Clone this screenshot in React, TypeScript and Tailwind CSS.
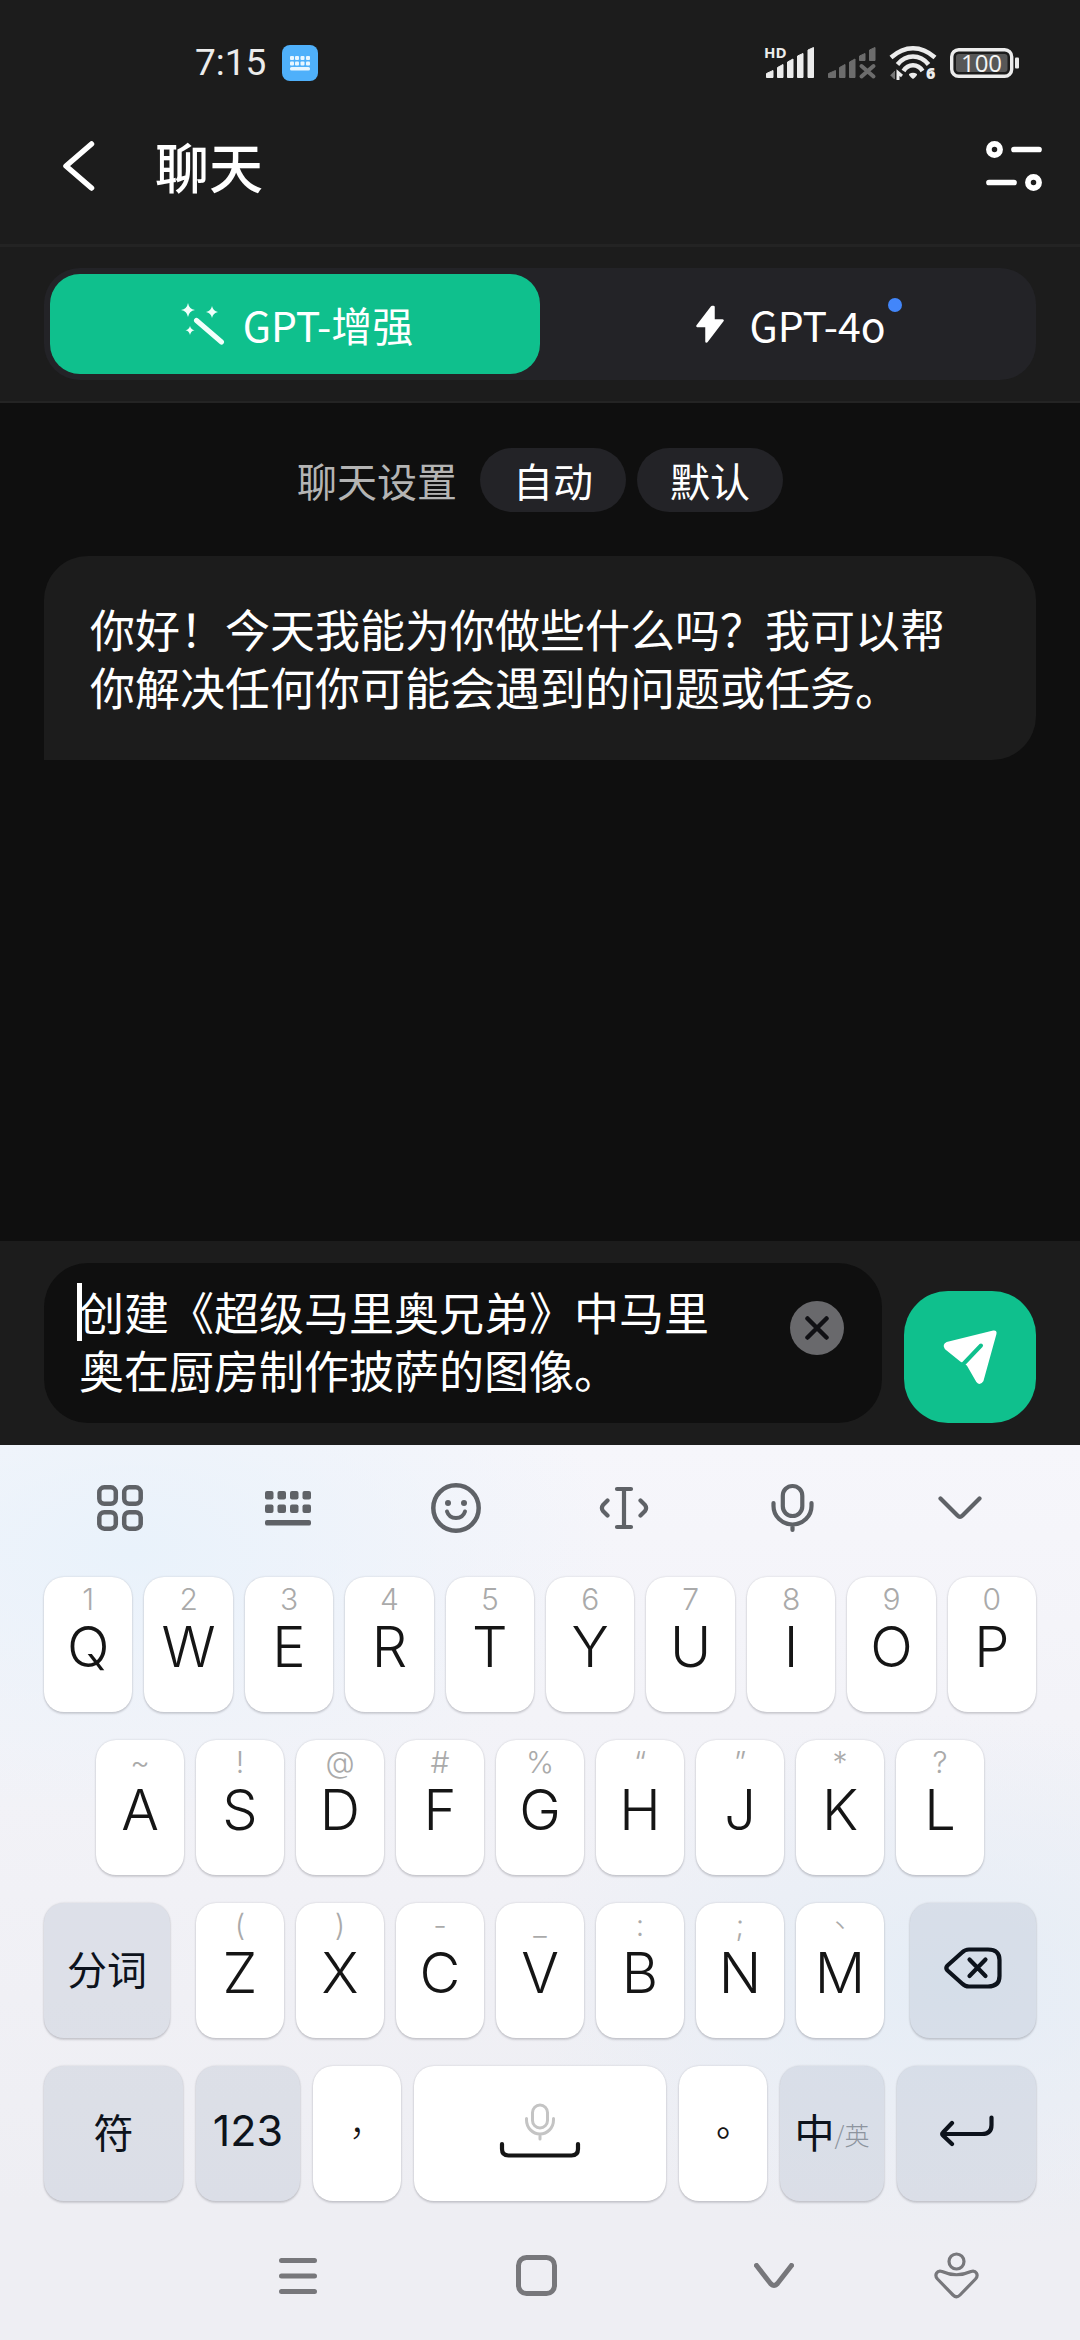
import React, { ChangeEvent, ReactNode, useState } from "react";
import clsx from "clsx";

interface IKey {
  letter: string;
  hint: string;
}

const firstRow: IKey[] = [
  { letter: "Q", hint: "1" },
  { letter: "W", hint: "2" },
  { letter: "E", hint: "3" },
  { letter: "R", hint: "4" },
  { letter: "T", hint: "5" },
  { letter: "Y", hint: "6" },
  { letter: "U", hint: "7" },
  { letter: "I", hint: "8" },
  { letter: "O", hint: "9" },
  { letter: "P", hint: "0" },
];

const secondRow: IKey[] = [
  { letter: "A", hint: "~" },
  { letter: "S", hint: "!" },
  { letter: "D", hint: "@" },
  { letter: "F", hint: "#" },
  { letter: "G", hint: "%" },
  { letter: "H", hint: "“" },
  { letter: "J", hint: "”" },
  { letter: "K", hint: "*" },
  { letter: "L", hint: "?" },
];

const thirdRow: IKey[] = [
  { letter: "Z", hint: "(" },
  { letter: "X", hint: ")" },
  { letter: "C", hint: "-" },
  { letter: "V", hint: "_" },
  { letter: "B", hint: ":" },
  { letter: "N", hint: ";" },
  { letter: "M", hint: "、" },
];

const StatusBar = () => (
  <div className="flex h-[88px] items-center justify-between pt-[38px] pr-[60px] pl-[195px]">
    <div className="flex items-center gap-4">
      <span className="font-['Roboto',sans-serif] text-[37px] leading-[44px] text-[#ececec]">
        7:15
      </span>
      <svg width="36" height="36" viewBox="0 0 36 36" aria-hidden="true">
        <rect width="36" height="36" rx="8" fill="#4fb0fa" />
        <g fill="#e8f6ff">
          {[8, 13, 18.5, 24].map((x) => (
            <React.Fragment key={x}>
              <rect x={x} y="11" width="4" height="4" rx="1" />
              <rect x={x} y="16.5" width="4" height="4" rx="1" />
            </React.Fragment>
          ))}
          <rect x="8" y="22" width="20" height="3.4" rx="1.5" />
        </g>
      </svg>
    </div>

    <div className="flex items-center gap-3">
      <svg
        width="51"
        height="36"
        viewBox="0 0 51 36"
        className="overflow-visible"
        aria-hidden="true"
      >
        <text
          x="0"
          y="13"
          fill="#ececec"
          fontFamily="Open Sans, sans-serif"
          fontSize="15"
          fontWeight="700"
        >
          HD
        </text>
        <path
          fill="#ececec"
          stroke="#ececec"
          strokeLinejoin="round"
          d="M2.5 28.5 9 25.5V32.5H2.5zM13.5 22.5 19 19.5V32.5H13.5zM23.5 17 29 14V32.5H23.5zM33.5 11 39 8.5V32.5H33.5zM44 5 49.5 2.5V32.5H44z"
        />
      </svg>
      <svg width="50" height="36" viewBox="0 0 50 36" aria-hidden="true">
        <path
          fill="#6c6c6c"
          stroke="#6c6c6c"
          strokeLinejoin="round"
          d="M1.5 28.5 8.5 25.5V32.5H1.5zM12.5 22.5 18 19.5V32.5H12.5zM22.5 17 28 14V32.5H22.5zM32.5 11 38 8.5V15.5H32.5zM42.5 5 48 2.5V15.5H42.5z"
        />
        <path
          d="M34.5 21 46.5 31.5M46.5 21 34.5 31.5"
          stroke="#6c6c6c"
          strokeWidth="4"
          strokeLinecap="round"
        />
      </svg>
      <svg
        width="48"
        height="36"
        viewBox="0 0 48 36"
        className="overflow-visible"
        aria-hidden="true"
      >
        <g fill="none" stroke="#ececec" strokeWidth="4.5">
          <path d="M2 12.5Q12.500 3.300 24 3.300T46 12.500" />
          <path d="M8.500 19.500Q15 11.600 24 11.600T39.500 19.500" />
          <path d="M14.500 26Q18 20.300 24 20.300T33.500 26" />
        </g>
        <path
          d="M20 29Q24 26.500 28 29 28.500 30.500 24 34 19.500 30.500 20 29z"
          fill="#ececec"
        />
        <path d="M1.500 30 5.500 34V26" fill="#777" stroke="#777" />
        <path d="M9 35V27.500L13 31" fill="none" stroke="#ececec" strokeWidth="3" />
        <text
          x="37"
          y="34"
          fill="#ececec"
          fontFamily="Open Sans, sans-serif"
          fontSize="16"
          fontWeight="800"
        >
          6
        </text>
      </svg>
      <svg width="71" height="32" viewBox="0 0 71 32" aria-hidden="true">
        <rect
          x="2.7"
          y="2.7"
          width="60"
          height="26.600"
          rx="7"
          fill="none"
          stroke="#ececec"
          strokeWidth="3.4"
        />
        <rect x="7" y="7" width="51.500" height="18" rx="3" fill="#575757" />
        <rect x="66" y="10.500" width="4" height="11" rx="1" fill="#ececec" />
        <text
          x="32.500"
          y="24.500"
          fill="#f4f4f4"
          textAnchor="middle"
          fontFamily="Open Sans, sans-serif"
          fontSize="24"
        >
          100
        </text>
      </svg>
    </div>
  </div>
);

const TitleBar = () => (
  <div className="flex h-[159px] items-center justify-between border-b-[3px] border-[#232323] pr-[38px] pl-[62px]">
    <div className="flex items-center gap-[60px]">
      <button type="button" aria-label="返回">
        <svg width="33" height="52" viewBox="0 0 33 52" fill="none">
          <path
            d="M29.500 4 4 26 29.500 48"
            stroke="#fff"
            strokeWidth="5.500"
            strokeLinecap="round"
            strokeLinejoin="round"
          />
        </svg>
      </button>
      <h1 className="text-[54px] leading-[64px] font-medium">聊天</h1>
    </div>
    <button type="button" aria-label="设置">
      <svg width="56" height="50" viewBox="0 0 56 50" fill="none">
        <g stroke="#fff" strokeWidth="5.700" strokeLinecap="round">
          <circle cx="8.500" cy="8.500" r="5.600" />
          <path d="M28 8.500H53M3 41.500H28" />
          <circle cx="47.500" cy="41.500" r="5.600" />
        </g>
      </svg>
    </button>
  </div>
);

const ModelTabs = () => {
  const [tab, setTab] = useState("enhanced");

  return (
    <div className="border-b-2 border-[#242424] px-11 pt-[21px] pb-[21px]">
      <div className="grid grid-cols-2 rounded-[36px] bg-[#232327] p-1.5 text-[41px] leading-[56px]">
        <button
          type="button"
          onClick={() => setTab("enhanced")}
          className={clsx(
            "flex h-[100px] items-center justify-center gap-[18px] rounded-[30px] pl-1",
            tab === "enhanced" && "bg-[#0fc08d]"
          )}
        >
          <svg width="44" height="44" viewBox="0 0 44 44" fill="#f2fffb">
            <path d="M7 1Q8 7 14 8 8 9 7 15 6 9 0 8 6 7 7 1zM31 4Q32 9 37 10 32 11 31 16 30 11 25 10 30 9 31 4zM9 24Q9.800 27.400 13.500 28.200 9.800 29 9 33 8.200 29 4.500 28.200 8.200 27.400 9 24z" />
            <path
              d="M15.500 18.500 40.500 40"
              stroke="#f2fffb"
              strokeWidth="5"
              strokeLinecap="round"
            />
          </svg>
          GPT-增强
        </button>
        <button
          type="button"
          onClick={() => setTab("4o")}
          className={clsx(
            "flex h-[100px] items-center justify-center gap-[25px] rounded-[30px] pl-3",
            tab === "4o" && "bg-[#0fc08d]"
          )}
        >
          <svg width="28" height="38" viewBox="0 0 28 38" fill="#fff">
            <path
              d="M16 2 1.500 21H10.500V36.500L26.500 15.500H17.500V2z"
              stroke="#fff"
              strokeWidth="2.500"
              strokeLinejoin="round"
            />
          </svg>
          <span className="relative">
            GPT-4o
            <span className="absolute top-0.5 -right-4 size-3.5 rounded-full bg-[#4286fa]" />
          </span>
        </button>
      </div>
    </div>
  );
};

const ChatArea = () => (
  <main className="flex-1 px-11 pt-[45px]">
    <div className="flex items-center justify-center gap-[11px] text-[40px] leading-[64px]">
      <span className="pr-3 text-[#b4b4b4]">聊天设置</span>
      <button type="button" className="rounded-full bg-[#232327] px-[33px]">
        自动
      </button>
      <button type="button" className="rounded-full bg-[#232327] px-[33px]">
        默认
      </button>
    </div>
    <p className="mt-11 rounded-[44px] rounded-bl-none bg-[#1c1c1c] py-11 pr-16 pl-[46px] text-[45px] leading-[58px]">
      你好！今天我能为你做些什么吗？我可以帮你解决任何你可能会遇到的问题或任务。
    </p>
  </main>
);

const MessageInput = () => {
  const [message, setMessage] = useState(
    "创建《超级马里奥兄弟》中马里奥在厨房制作披萨的图像。"
  );

  const onMessageChange = (e: ChangeEvent<HTMLTextAreaElement>) => {
    setMessage(e.target.value);
  };

  return (
    <div className="flex items-end gap-[22px] bg-[#1c1c1c] px-11 py-[22px]">
      <div className="relative flex flex-1 items-start rounded-[44px] bg-[#0f0f0f] pt-5 pr-[38px] pb-6 pl-[35px]">
        <span className="absolute left-[33px] h-[58px] w-[5px] bg-white" />
        <textarea
          aria-label="消息"
          rows={2}
          value={message}
          onChange={onMessageChange}
          className="block w-full flex-1 resize-none overflow-hidden text-[45px] leading-[58px] outline-none"
        />
        <button
          type="button"
          aria-label="清除"
          onClick={() => setMessage("")}
          className="mt-[18px] ml-12 flex size-[54px] items-center justify-center rounded-full bg-[#69696c]"
        >
          <svg width="24" height="24" viewBox="0 0 24 24">
            <path
              d="M2.500 2.500 21.500 21.500M21.500 2.500 2.500 21.500"
              stroke="#101014"
              strokeWidth="4.500"
              strokeLinecap="round"
            />
          </svg>
        </button>
      </div>
      <button
        type="button"
        aria-label="发送"
        className="flex size-[132px] items-center justify-center rounded-[44px] bg-[#0fc08d]"
      >
        <svg width="56" height="58" viewBox="0 0 56 58">
          <path
            d="M51.500 4 5 15.500Q2 17 4 20L19.500 32.500 26 36.500 35.500 53Q38 56 40 52.500L53 5.500Q53.500 3.500 51.500 4z"
            fill="#fff"
            stroke="#fff"
            strokeWidth="3"
            strokeLinejoin="round"
          />
          <path
            d="M18 39.500 39 17.500"
            stroke="#0fc08d"
            strokeWidth="4"
            strokeLinecap="round"
          />
        </svg>
      </button>
    </div>
  );
};

const ToolButton = ({ label, children }: { label: string; children: ReactNode }) => (
  <button type="button" aria-label={label} className="flex items-center justify-center">
    {children}
  </button>
);

const Toolbar = () => (
  <div className="grid h-[125px] grid-cols-6 px-9 text-[#5f6267]">
    <ToolButton label="菜单">
      <svg width="46" height="46" viewBox="0 0 46 46" fill="none">
        <g stroke="currentColor" strokeWidth="4.500">
          <rect x="2.300" y="2.300" width="16.500" height="16.500" rx="5" />
          <rect x="27.200" y="2.300" width="16.500" height="16.500" rx="5" />
          <rect x="2.300" y="27.200" width="16.500" height="16.500" rx="5" />
          <rect x="27.200" y="27.200" width="16.500" height="16.500" rx="5" />
        </g>
      </svg>
    </ToolButton>
    <ToolButton label="键盘">
      <svg width="46" height="36" viewBox="0 0 46 36" fill="currentColor">
        {[0, 12.5, 25, 37.5].map((x) => (
          <React.Fragment key={x}>
            <rect x={x} y="1" width="8.500" height="8.500" rx="2" />
            <rect x={x} y="14.500" width="8.500" height="8.500" rx="2" />
          </React.Fragment>
        ))}
        <rect y="30" width="46" height="5.500" rx="2" />
      </svg>
    </ToolButton>
    <ToolButton label="表情">
      <svg width="50" height="50" viewBox="0 0 50 50" fill="none">
        <circle cx="25" cy="25" r="22.700" stroke="currentColor" strokeWidth="4.500" />
        <circle cx="17" cy="20" r="3" fill="currentColor" />
        <circle cx="33" cy="20" r="3" fill="currentColor" />
        <path
          d="M16 28.500Q18 35 25 35T34 28.500"
          stroke="currentColor"
          strokeWidth="4"
          strokeLinecap="round"
        />
      </svg>
    </ToolButton>
    <ToolButton label="光标">
      <svg width="50" height="44" viewBox="0 0 50 44" fill="none">
        <path
          d="M25 3V41M18 3H32M18 41H32M8.500 14.500 4 19Q1.800 22 4 25L8.500 29.500M41.500 14.500 46 19Q48.200 22 46 25L41.500 29.500"
          stroke="currentColor"
          strokeWidth="4.200"
          strokeLinecap="round"
          strokeLinejoin="round"
        />
      </svg>
    </ToolButton>
    <ToolButton label="语音">
      <svg width="45" height="50" viewBox="0 0 45 50" fill="none">
        <g stroke="currentColor" strokeWidth="4.200" strokeLinecap="round">
          <rect x="12.800" y="3" width="19.500" height="30" rx="9.700" />
          <path d="M3.500 20V23A19 18.500 0 0 0 41.500 23V20M22.500 41.500V47" />
        </g>
      </svg>
    </ToolButton>
    <ToolButton label="收起">
      <svg width="44" height="24" viewBox="0 0 44 24" fill="none">
        <path
          d="M2.500 2.500 19.500 19.500Q22 22 24.500 19.500L41.500 2.500"
          stroke="currentColor"
          strokeWidth="4.200"
          strokeLinecap="round"
        />
      </svg>
    </ToolButton>
  </div>
);

const keyBase =
  "flex h-[135px] items-center justify-center rounded-[20px] pb-1.5 shadow-[0_2px_2px_rgba(60,60,70,0.18),0_0_2px_rgba(60,60,70,0.22)]";
const darkKey = "bg-[#b4bfcc]/32 text-[#0d131c]";

const LetterKeys = ({ keys }: { keys: IKey[] }) => (
  <>
    {keys.map((k) => (
      <button
        key={k.letter}
        type="button"
        className="flex h-[135px] flex-1 flex-col items-center rounded-[20px] bg-white pt-1 font-['Inter','Noto_Sans_CJK_TC',sans-serif] font-light shadow-[0_2px_2px_rgba(60,60,70,0.18),0_0_2px_rgba(60,60,70,0.22)]"
      >
        <span className="text-[30px] leading-9 text-[#aaaaaa]">{k.hint}</span>
        <span className="text-[56px] leading-[60px] text-[#151515]">{k.letter}</span>
      </button>
    ))}
  </>
);

const Keyboard = () => (
  <div className="bg-[#f1f1f6] bg-[radial-gradient(ellipse_45%_30%_at_12%_12%,#e9f2fb_0%,transparent_100%),radial-gradient(ellipse_40%_30%_at_88%_60%,#e5edf6_0%,transparent_100%),linear-gradient(#f6f6fb,#f1f1f6_50%,#eeeef3_85%)]">
    <Toolbar />
    <div className="flex flex-col gap-7 pt-[7px]">
      <div className="flex gap-3 px-11">
        <LetterKeys keys={firstRow} />
      </div>
      <div className="flex gap-3 px-24">
        <LetterKeys keys={secondRow} />
      </div>
      <div className="flex gap-[26px] px-11">
        <button type="button" className={clsx(keyBase, darkKey, "w-[126px] text-[40px]")}>
          分词
        </button>
        <div className="flex flex-1 gap-3">
          <LetterKeys keys={thirdRow} />
        </div>
        <button
          type="button"
          aria-label="删除"
          className={clsx(keyBase, darkKey, "w-[126px]")}
        >
          <svg width="58" height="42" viewBox="0 0 58 42" fill="none">
            <path
              d="M3.500 18.500 18 5.500Q21 2.500 25 2.500H44Q55.500 2.500 55.500 13V29Q55.500 39.500 44 39.500H25Q21 39.500 18 36.500L3.500 23.500Q1 21 3.500 18.500zM25.500 12.500 41.500 29M41.500 12.500 25.500 29"
              stroke="currentColor"
              strokeWidth="4.200"
              strokeLinecap="round"
              strokeLinejoin="round"
            />
          </svg>
        </button>
      </div>
      <div className="flex gap-[13px] px-11">
        <button type="button" className={clsx(keyBase, darkKey, "w-[139px] text-[40px]")}>
          符
        </button>
        <button
          type="button"
          className={clsx(keyBase, darkKey, "w-[104px] font-['Inter',sans-serif] text-[43px]")}
        >
          123
        </button>
        <button
          type="button"
          className={clsx(
            keyBase,
            "w-[88px] bg-white font-['Noto_Sans_CJK_TC',sans-serif] text-[36px] font-light text-[#151515]"
          )}
        >
          ，
        </button>
        <button
          type="button"
          aria-label="空格"
          className={clsx(keyBase, "flex-1 bg-white text-[#151515]")}
        >
          <svg width="82" height="58" viewBox="0 0 82 58" fill="none" strokeLinecap="round">
            <g stroke="#c4c4c4" strokeWidth="3">
              <rect x="33.500" y="3" width="15" height="23" rx="7.500" />
              <path d="M27.500 16.500V18A13.500 14 0 0 0 54.500 18V16.500M41 32V37" />
            </g>
            <path
              d="M3 42V47Q3 53.500 9.500 53.500H72.500Q79 53.500 79 47V42"
              stroke="currentColor"
              strokeWidth="4.200"
            />
          </svg>
        </button>
        <button
          type="button"
          className={clsx(
            keyBase,
            "w-[88px] bg-white font-['Noto_Sans_CJK_TC',sans-serif] text-[36px] text-[#151515]"
          )}
        >
          。
        </button>
        <button type="button" className={clsx(keyBase, darkKey, "w-[104px]")}>
          <span className="text-[40px]">中</span>
          <span className="pt-2 text-[25px] font-light text-[#8d949e]">/英</span>
        </button>
        <button
          type="button"
          aria-label="换行"
          className={clsx(keyBase, darkKey, "w-[139px]")}
        >
          <svg width="56" height="32" viewBox="0 0 56 32" fill="none">
            <path
              d="M13 8 4 17.500Q2.500 19 4 20.500L13 29M4 19H43Q52.500 19 52.500 10V2.500"
              stroke="currentColor"
              strokeWidth="4.200"
              strokeLinecap="round"
              strokeLinejoin="round"
            />
          </svg>
        </button>
      </div>
    </div>

    {/* system navigation */}
    <nav className="grid h-[139px] grid-cols-[179fr_238fr_238fr_238fr_126fr_61fr] pt-2.5 text-[#77777b]">
      <button
        type="button"
        aria-label="最近任务"
        className="col-start-2 flex items-center justify-center"
      >
        <svg width="38" height="38" viewBox="0 0 38 38">
          <path
            d="M2.500 3.500H35.500M2.500 19H35.500M2.500 34.500H35.500"
            stroke="currentColor"
            strokeWidth="5"
            strokeLinecap="round"
          />
        </svg>
      </button>
      <ToolButton label="主页">
        <svg width="41" height="41" viewBox="0 0 41 41" fill="none">
          <rect
            x="2.500"
            y="2.500"
            width="36"
            height="36"
            rx="8"
            stroke="currentColor"
            strokeWidth="5"
          />
        </svg>
      </ToolButton>
      <ToolButton label="隐藏键盘">
        <svg width="40" height="26" viewBox="0 0 40 26" fill="none">
          <path
            d="M2.500 2.500 16.500 20.500Q20 24.500 23.500 20.500L37.500 2.500"
            stroke="currentColor"
            strokeWidth="5"
            strokeLinecap="round"
          />
        </svg>
      </ToolButton>
      <ToolButton label="无障碍">
        <svg width="45" height="47" viewBox="0 0 45 47" fill="none">
          <g stroke="currentColor" strokeWidth="3.200" strokeLinejoin="round">
            <circle cx="22.500" cy="9.500" r="7.500" />
            <path d="M8 19.500Q22.500 26 37 19.500C42 18 45 23 41.500 27L26 43Q22.500 46.500 19 43L3.500 27C0 23 3 18 8 19.500z" />
          </g>
        </svg>
      </ToolButton>
    </nav>
  </div>
);

const App = () => {
  return (
    <div className="flex min-h-screen flex-col bg-[#0f0f0f] font-['Noto_Sans_CJK_SC',sans-serif] text-white">
      <header className="bg-[#1c1c1c]">
        <StatusBar />
        <TitleBar />
        <ModelTabs />
      </header>
      <ChatArea />
      <MessageInput />
      <Keyboard />
    </div>
  );
};

export default App;
